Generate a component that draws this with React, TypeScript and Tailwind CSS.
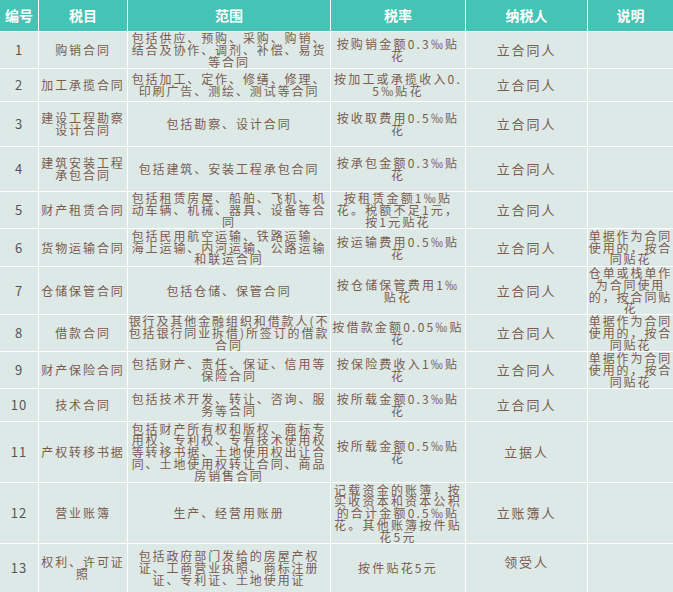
import React from "react";

interface TaxRow {
  no: string;
  item: string;
  scope: string;
  rate: string;
  payer: string;
  note: string;
}

// line breaks in rate/scope follow the source document
const rows: TaxRow[] = [
  { no: "1", item: "购销合同", scope: "包括供应、预购、采购、购销、结合及协作、调剂、补偿、易货等合同", rate: "按购销金额0.3‰贴\n花", payer: "立合同人", note: "" },
  { no: "2", item: "加工承揽合同", scope: "包括加工、定作、修缮、修理、印刷广告、测绘、测试等合同", rate: "按加工或承揽收入0.\n5‰贴花", payer: "立合同人", note: "" },
  { no: "3", item: "建设工程勘察设计合同", scope: "包括勘察、设计合同", rate: "按收取费用0.5‰贴\n花", payer: "立合同人", note: "" },
  { no: "4", item: "建筑安装工程承包合同", scope: "包括建筑、安装工程承包合同", rate: "按承包金额0.3‰贴\n花", payer: "立合同人", note: "" },
  { no: "5", item: "财产租赁合同", scope: "包括租赁房屋、船舶、飞机、机动车辆、机械、器具、设备等合同", rate: "按租赁金额1‰贴\n花。税额不足1元，\n按1元贴花", payer: "立合同人", note: "" },
  { no: "6", item: "货物运输合同", scope: "包括民用航空运输、铁路运输、海上运输、内河运输、公路运输和联运合同", rate: "按运输费用0.5‰贴\n花", payer: "立合同人", note: "单据作为合同使用的，按合同贴花" },
  { no: "7", item: "仓储保管合同", scope: "包括仓储、保管合同", rate: "按仓储保管费用1‰\n贴花", payer: "立合同人", note: "仓单或栈单作为合同使用的，按合同贴花" },
  { no: "8", item: "借款合同", scope: "银行及其他金融组织和借款人(不\n包括银行同业拆借)所签订的借款\n合同", rate: "按借款金额0.05‰贴\n花", payer: "立合同人", note: "单据作为合同使用的，按合同贴花" },
  { no: "9", item: "财产保险合同", scope: "包括财产、责任、保证、信用等保险合同", rate: "按保险费收入1‰贴\n花", payer: "立合同人", note: "单据作为合同使用的，按合同贴花" },
  { no: "10", item: "技术合同", scope: "包括技术开发、转让、咨询、服务等合同", rate: "按所载金额0.3‰贴\n花", payer: "立合同人", note: "" },
  { no: "11", item: "产权转移书据", scope: "包括财产所有权和版权、商标专用权、专利权、专有技术使用权等转移书据、土地使用权出让合同、土地使用权转让合同、商品房销售合同", rate: "按所载金额0.5‰贴\n花", payer: "立据人", note: "" },
  { no: "12", item: "营业账簿", scope: "生产、经营用账册", rate: "记载资金的账簿，按\n实收资本和资本公积\n的合计金额0.5‰贴\n花。其他账簿按件贴\n花5元", payer: "立账簿人", note: "" },
  { no: "13", item: "权利、许可证照", scope: "包括政府部门发给的房屋产权证、工商营业执照、商标注册证、专利证、土地使用证", rate: "按件贴花5元", payer: "领受人", note: "" },
];

const headers = ["编号", "税目", "范围", "税率", "纳税人", "说明"];

const cell =
  "flex items-center justify-center bg-[#dce9e6] text-center text-[12px] leading-[11.7px] tracking-[1.9px] text-[#7b5c4f] whitespace-pre-line";

export default function App() {
  return (
    <div
      className="w-[673px] h-[592px] overflow-hidden bg-white"
      style={{ fontFamily: '"Noto Sans CJK SC", "Noto Sans", sans-serif' }}
    >
      <div className="grid grid-cols-[38px_88px_202px_134px_121px_85px] grid-rows-[31px_36px_32px_44px_44px_36px_37px_47px_36px_36px_32px_60px_60px_48px] gap-px bg-white">
        {headers.map((h) => (
          <div
            key={h}
            className="flex items-center justify-center bg-[#45c4b5] text-[14px] font-bold text-white"
          >
            {h}
          </div>
        ))}
        {rows.map((r) => (
          <React.Fragment key={r.no}>
            <div className="flex items-center justify-center bg-[#dce9e6] text-[13px] tracking-[1px] text-[#555]">
              {r.no}
            </div>
            <div className={cell}>{r.item}</div>
            <div className={cell}>
              <span className="-mx-[1px]">{r.scope}</span>
            </div>
            <div className={cell}>
              <span className="tracking-[2.2px]">{r.rate}</span>
            </div>
            <div className={cell + " text-[13px] tracking-[1.2px] " + (r.no === "13" ? "pb-[12px]" : "")}>
              {r.payer}
            </div>
            <div className={cell}>
              <span>{r.note}</span>
            </div>
          </React.Fragment>
        ))}
      </div>
    </div>
  );
}
